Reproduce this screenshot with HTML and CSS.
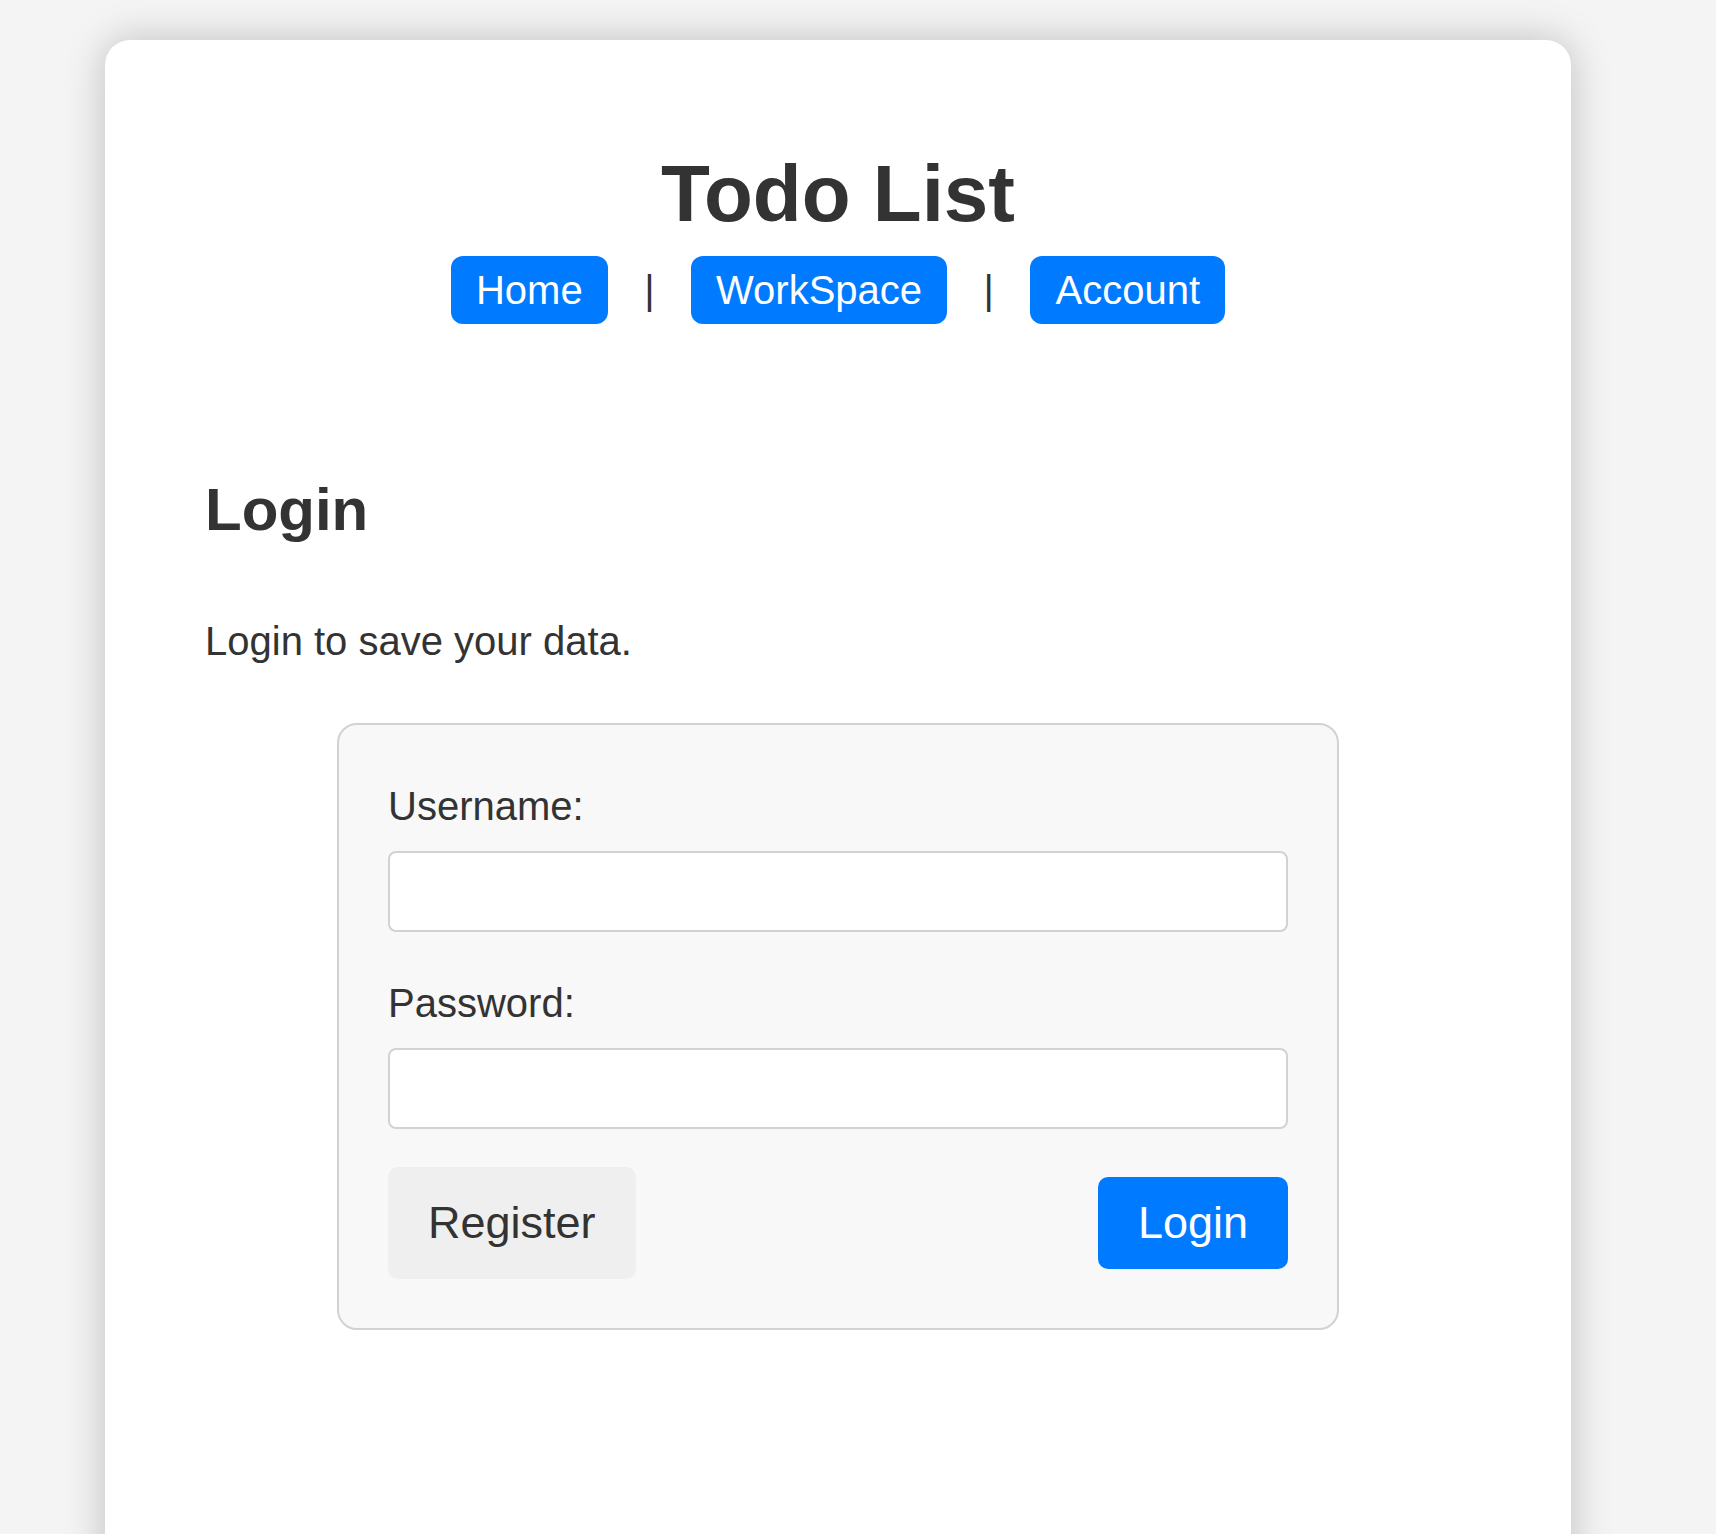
FILE: index.html
```html
<!DOCTYPE html>
<html lang="en">
<head>
<meta charset="utf-8">
<title>Todo List</title>
<link rel="stylesheet" href="styles.css">
</head>
<body>
  <div class="card">
    <header class="header">
      <h1 class="title">Todo List</h1>
      <nav class="nav">
        <a class="nav-btn" href="#">Home</a>
        <span class="sep">|</span>
        <a class="nav-btn" href="#">WorkSpace</a>
        <span class="sep">|</span>
        <a class="nav-btn" href="#">Account</a>
      </nav>
    </header>
    <main class="content">
      <h2 class="heading">Login</h2>
      <p class="lead">Login to save your data.</p>
      <form class="login-box">
        <label class="field-label" for="username">Username:</label>
        <input class="field-input" id="username" type="text">
        <label class="field-label second" for="password">Password:</label>
        <input class="field-input" id="password" type="password">
        <div class="actions">
          <button type="button" class="btn-register">Register</button>
          <button type="button" class="btn-login">Login</button>
        </div>
      </form>
    </main>
  </div>
</body>
</html>
```

FILE: styles.css
```css
html, body {
  height: 100%;
  overflow: hidden;
}

body {
  margin: 0;
  background: #f4f4f4;
  font-family: "Liberation Sans", Arial, Helvetica, sans-serif;
  color: #333333;
}

.card {
  box-sizing: border-box;
  width: 1466px;
  min-height: 1600px;
  margin: 40px 0 0 105px;
  padding: 108px 100px 100px 100px;
  background: #ffffff;
  border-radius: 25px;
  box-shadow: 0 0 40px rgba(0, 0, 0, 0.22);
}

.header {
  display: flex;
  flex-direction: column;
  align-items: center;
}

.title {
  margin: 0;
  font-size: 80px;
  line-height: 92px;
  font-weight: bold;
  color: #333333;
}

.nav {
  margin-top: 16px;
  display: flex;
  align-items: center;
  gap: 36.5px;
}

.nav-btn {
  display: block;
  padding: 11px 25px;
  font-size: 40px;
  line-height: 46px;
  color: #ffffff;
  background: #007bff;
  border-radius: 12px;
  text-decoration: none;
}

.sep {
  font-size: 40px;
  line-height: 46px;
  color: #333333;
}

.content {
  margin-top: 151px;
}

.heading {
  margin: 0;
  font-size: 60px;
  line-height: 70px;
  font-weight: bold;
}

.lead {
  margin: 73px 0 0 0;
  font-size: 40px;
  line-height: 46px;
}

.login-box {
  box-sizing: border-box;
  width: 1002px;
  margin: 59px auto 0 auto;
  padding: 58px 49px 49px 49px;
  background: #f8f8f8;
  border: 2px solid #d2d2d2;
  border-radius: 20px;
  display: flex;
  flex-direction: column;
}

.field-label {
  font-size: 40px;
  line-height: 46px;
  color: #333333;
}

.field-label.second {
  margin-top: 48px;
}

.field-input {
  box-sizing: border-box;
  width: 100%;
  height: 81px;
  margin: 22px 0 0 0;
  padding: 0 16px;
  background: #ffffff;
  border: 2px solid #d2d2d2;
  border-radius: 8px;
  font-family: inherit;
  font-size: 40px;
}

.actions {
  margin-top: 38px;
  display: flex;
  justify-content: space-between;
  align-items: center;
}

.btn-register,
.btn-login {
  font-family: inherit;
  font-size: 45px;
  line-height: 52px;
  border: none;
  border-radius: 10px;
  cursor: pointer;
}

.btn-register {
  padding: 30px 40px;
  background: #efefef;
  color: #333333;
}

.btn-login {
  padding: 20px 40px;
  background: #007bff;
  color: #ffffff;
}
```
